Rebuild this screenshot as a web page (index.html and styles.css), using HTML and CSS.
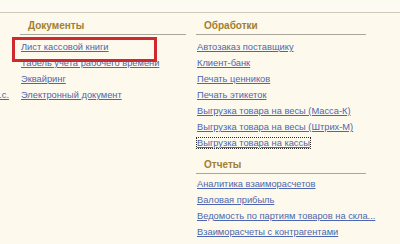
FILE: index.html
```html
<!DOCTYPE html>
<html lang="ru">
<head>
  <meta charset="UTF-8" />
  <title>Панель разделов</title>
  <link rel="stylesheet" href="styles.css">
</head>
<body>

  <div class="top-strip"></div>

  <div class="columns">
    <div class="col col-cut">
      <ul class="links">
        <li>&nbsp;</li>
        <li>&nbsp;</li>
        <li>&nbsp;</li>
        <li><a href="#">Отчет к.с.</a></li>
      </ul>
    </div>

    <div class="col col-docs">
      <div class="col-head">Документы</div>
      <ul class="links">
        <li class="marked"><a href="#">Лист кассовой книги</a></li>
        <li><a href="#">Табель учета рабочего времени</a></li>
        <li><a href="#">Эквайринг</a></li>
        <li><a href="#">Электронный документ</a></li>
      </ul>
    </div>

    <div class="col col-tools">
      <div class="col-head">Обработки</div>
      <ul class="links">
        <li><a href="#">Автозаказ поставщику</a></li>
        <li><a href="#">Клиент-банк</a></li>
        <li><a href="#">Печать ценников</a></li>
        <li><a href="#">Печать этикеток</a></li>
        <li><a href="#">Выгрузка товара на весы (Масса-К)</a></li>
        <li><a href="#">Выгрузка товара на весы (Штрих-М)</a></li>
        <li><a href="#" class="focused">Выгрузка товара на кассы</a></li>
      </ul>

      <div class="col-head second">Отчеты</div>
      <ul class="links after-second">
        <li><a href="#">Аналитика взаиморасчетов</a></li>
        <li><a href="#">Валовая прибыль</a></li>
        <li><a href="#">Ведомость по партиям товаров на скла...</a></li>
        <li><a href="#">Взаиморасчеты с контрагентами</a></li>
        <li><a href="#">Движение товаров</a></li>
      </ul>
    </div>
  </div>

</body>
</html>
```

FILE: styles.css
```css
* {
  box-sizing: border-box;
}

body {
  margin: 0;
  padding: 0;
  font-family: "Liberation Sans", Arial, sans-serif;
  font-size: 9.3px;
  background: #fdf9ec;
  height: 244px;
  overflow: hidden;
}

.top-strip {
  height: 13px;
  background: #fcfaf3;
  border-bottom: 1px solid #cdc8ba;
}

.columns {
  display: flex;
  align-items: flex-start;
}

.col-cut {
  width: 9px;
  overflow: hidden;
  margin-right: 11px;
  padding-top: 22px;
}

.col-cut .links {
  display: flex;
  flex-direction: column;
  align-items: flex-end;
}

.col-docs {
  width: 166px;
  margin-right: 10px;
}

.col-tools {
  width: 170px;
}

.col-head {
  height: 22px;
  padding: 4px 0 0 8px;
  line-height: 17px;
  font-size: 10px;
  font-weight: bold;
  color: #a27f30;
  border-bottom: 1px solid #aaa69b;
}

.col-head.second {
  height: 23px;
  padding-top: 4px;
  line-height: 19px;
}

.links {
  list-style: none;
  margin: 0;
  padding: 4px 0 0 1px;
}

.links.after-second {
  padding-top: 2px;
}

.links li {
  height: 16px;
  line-height: 16px;
  white-space: nowrap;
}

.links a {
  color: #4d66ae;
  text-decoration: underline;
}

.links a.focused {
  outline: 1px dotted #2a2a2a;
  outline-offset: 0;
}

/* red annotation frame over the first document */
.marked {
  position: relative;
}

.marked::after {
  content: "";
  position: absolute;
  left: -9px;
  top: -2px;
  width: 139px;
  height: 19px;
  border: 3px solid #d0282f;
}
```
